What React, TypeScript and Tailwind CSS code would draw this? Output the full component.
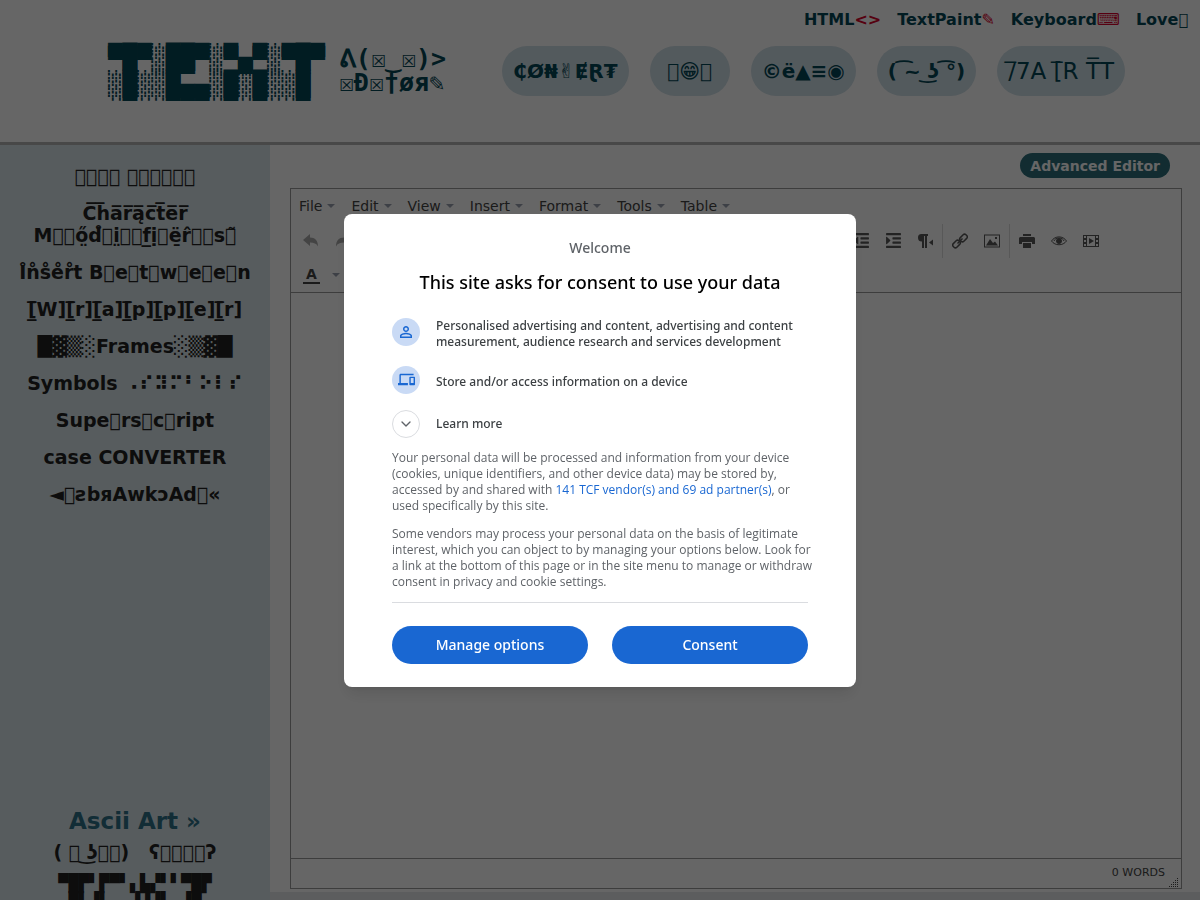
import type { ReactNode } from "react"
import { ChevronDown } from "lucide-react"
import { MdDevices, MdPersonOutline } from "react-icons/md"
import { FaIndent, FaOutdent } from "react-icons/fa"

const topLinks = [
  { label: "HTML", mark: "<>" },
  { label: "TextPaint", mark: "✎" },
  { label: "Keyboard", mark: "⌨" },
  { label: "Love", mark: "\u{F0000}", plain: true },
]

const pills = ["₵Ø₦✌ɆⱤ₮", "\u{F0000}😁\u{F0000}", "©ë▲≡◉", "( ͡~ ͜ʖ ͡°)"]

const sideLinks = [
  "\u{F0000}\u{F0000}\u{F0000}\u{F0000} \u{F0000}\u{F0000}\u{F0000}\u{F0000}\u{F0000}\u{F0000}",
  "C̅h̅a̅r̅ą̅c̅t̅e̅r̅ M\u{F0000}\u{F0000}ő̤d̊\u{F0000}i̤\u{F0000}\u{F0000}f̲ị\u{F0000}ë̱r̂\u{F0000}\u{F0000}s\u{F0000}̃",
  "I̊n̊s̊e̊r̊t B\u{F0000}e\u{F0000}t\u{F0000}w\u{F0000}e\u{F0000}e\u{F0000}n",
  "[̲̅W][̲̅r][̲̅a][̲̅p][̲̅p][̲̅e][̲̅r]",
  "█▓▒░Frames░▒▓█",
  "Symbols ⠠⠎⠽⠍⠃⠕⠇⠎",
  "Supe\u{F0000}rs\u{F0000}c\u{F0000}ript",
  "case CONVERTER",
  "◄\u{F0000}ƨbяAwkɔAd\u{F0000}«",
]

const menus = ["File", "Edit", "View", "Insert", "Format", "Tools", "Table"]

function ToolButton({ label, children }: { label: string; children: ReactNode }) {
  return (
    <button type="button" aria-label={label} className="flex h-7 w-8 items-center justify-center text-[#595959]">
      {children}
    </button>
  )
}

function Caret() {
  return <span className="border-x-4 border-t-4 border-x-transparent border-t-gray-400" />
}

function Header() {
  return (
    <header className="h-[145px] shrink-0 border-b-3 border-[#b4b4b4] bg-white text-[#044655]">
      <nav className="flex h-10 items-center justify-end gap-4 pr-3 text-base font-bold">
        {topLinks.map((link) => (
          <a key={link.label} href="#" className="whitespace-nowrap">
            {link.label}
            <span className={link.plain ? "" : "text-[#d8002c]"}>{link.mark}</span>
          </a>
        ))}
      </nav>
      <div className="flex items-start">
        <a href="#" className="ml-27 flex items-center gap-[14px] pt-1 font-bold">
          <pre className="font-['DejaVu_Sans_Mono',monospace] text-2xl leading-[27px] text-shadow-[0_3px_0_#044655]">
            {"▀█▀░██▀░▀▄▀░▀█▀\n░█░░█▄▄░█░█░░█ "}
          </pre>
          <pre className="font-['DejaVu_Sans_Mono',monospace] text-[25px] leading-6">{"ᕕ(☒‿☒)>\n☒Ð☒†øя✎"}</pre>
        </a>
        <nav className="ml-14 flex gap-[21px] pt-[6px]">
          {pills.map((pill) => (
            <a
              key={pill}
              href="#"
              className="flex h-[50px] min-w-20 items-center justify-center rounded-full bg-[#cfe0e8] px-[11px] text-xl font-bold whitespace-nowrap"
            >
              {pill}
            </a>
          ))}
          <a
            href="#"
            className="flex h-[50px] items-center justify-center rounded-full bg-[#cfe0e8] px-[11px] text-[23px] whitespace-nowrap"
          >
            {"/̅7A [̅R T̅T"}
          </a>
        </nav>
      </div>
    </header>
  )
}

function Sidebar() {
  return (
    <aside className="flex w-[270px] shrink-0 flex-col bg-[#dae6ea] text-center text-[#222]">
      <nav className="flex flex-col gap-[15px] px-4 pt-5 text-[19px] leading-[22px] font-bold">
        {sideLinks.map((link) => (
          <a key={link} href="#">
            {link}
          </a>
        ))}
      </nav>
      <div className="mt-auto h-24 overflow-hidden">
        <a href="#" className="block text-[23px] leading-[34px] font-bold text-[#2d7088]">
          Ascii Art »
        </a>
        <p className="text-[19px] leading-7 font-bold whitespace-pre">
          {"( \u{F0000} ͜ʖ\u{F0000}\u{F0000})   ʕ\u{F0000}\u{F0000}\u{F0000}\u{F0000}ʔ"}
        </p>
        <pre className="pt-2 font-['DejaVu_Sans_Mono',monospace] text-[17px] leading-[18px] font-bold">
          {"▀█▛▘▛▀▘▖▙▞▘▘▀█▛\n▖█▌▝▙▄▖▐▐▐▌▖▝█▖"}
        </pre>
      </div>
    </aside>
  )
}

function Toolbar() {
  return (
    <div className="border-b border-[#999] px-1">
      <div className="flex h-[34px] items-center gap-4 px-1 text-sm text-[#444]">
        {menus.map((menu) => (
          <button key={menu} type="button" className="flex items-center gap-[5px]">
            {menu}
            <Caret />
          </button>
        ))}
      </div>
      <div className="flex h-[35px] items-center justify-between pr-[70px]">
        <div className="flex">
          <ToolButton label="Undo">
            <svg viewBox="0 0 16 14" className="w-4 fill-[#aaa]">
              <path d="M7 0v3.5c5 0 8 3 8 9-1.500-3-4-4-8-4V12L0 6z" />
            </svg>
          </ToolButton>
          <ToolButton label="Redo">
            <svg viewBox="0 0 16 14" className="w-4 fill-[#aaa]">
              <path d="M9 0v3.500c-5 0-8 3-8 9 1.500-3 4-4 8-4V12l7-6z" />
            </svg>
          </ToolButton>
        </div>
        <div className="flex items-center">
          <ToolButton label="Decrease indent">
            <FaOutdent size={17} />
          </ToolButton>
          <ToolButton label="Increase indent">
            <FaIndent size={17} />
          </ToolButton>
          <ToolButton label="Right to left">
            <svg viewBox="0 0 16 16" className="w-4 fill-current">
              <path d="M4.500 1H11v2h-1v12H8V3H7v12H5V8.500a3.750 3.750 0 0 1-.5-7.500zM16 6.500v6L12 9.500z" />
            </svg>
          </ToolButton>
          <span className="mx-px h-[34px] w-px bg-[#ddd]" />
          <ToolButton label="Insert link">
            <svg viewBox="0 0 16 16" className="w-4 fill-none stroke-current" strokeWidth="1.5">
              <rect x="7.500" y="2.500" width="8" height="5" rx="2" transform="rotate(-45 11.500 5)" />
              <rect x=".5" y="8.500" width="8" height="5" rx="2" transform="rotate(-45 4.500 11)" />
              <path d="M5.500 10.500l5-5" />
            </svg>
          </ToolButton>
          <ToolButton label="Insert image">
            <svg viewBox="0 0 16 16" className="w-4 fill-current">
              <path d="M0 1.500h16v13H0zM1 2.500v11h14v-11z" fillRule="evenodd" />
              <path d="M2 12.500L6 6l3 4 2-1.500 3 4zM11 4h2v2h-2z" />
            </svg>
          </ToolButton>
          <span className="mx-px h-[34px] w-px bg-[#ddd]" />
          <ToolButton label="Print">
            <svg viewBox="0 0 16 16" className="w-4 fill-current">
              <path d="M4 1h8v2H4zM1 4h14l1 1v6h-3V9H3v2H0V5zM4 10h8v5H4z" />
            </svg>
          </ToolButton>
          <ToolButton label="Preview">
            <svg viewBox="0 0 16 16" className="w-4 fill-none stroke-current">
              <path d="M.5 8C4 2.500 12 2.500 15.500 8 12 13 4 13 .5 8z" />
              <path d="M3 8c1-2 2-3 5-3s4 1 5 3" />
              <circle cx="8" cy="8" r="2.500" fill="currentColor" />
            </svg>
          </ToolButton>
          <ToolButton label="Insert media">
            <svg viewBox="0 0 16 16" className="w-4 fill-current">
              <path
                fillRule="evenodd"
                d="M0 2h16v12H0zM1 3v2h2V3zM1 7v2h2V7zM1 11v2h2v-2zM13 3v2h2V3zM13 7v2h2V7zM13 11v2h2v-2zM4 3v10h8V3z"
              />
              <path d="M6 5l5 3-5 3z" />
            </svg>
          </ToolButton>
        </div>
      </div>
      <div className="flex h-[34px] items-center">
        <button type="button" aria-label="Text color" className="flex items-center gap-3 px-2 text-[#444]">
          <span className="border-b-2 border-current px-[3px] text-sm leading-4 font-bold">A</span>
          <Caret />
        </button>
      </div>
    </div>
  )
}

function Editor() {
  return (
    <main className="mb-2 flex min-w-0 flex-1 flex-col bg-white px-5 pt-2 pr-[18px] pb-[3px]">
      <button
        type="button"
        className="mr-3 mb-[10px] h-[25px] self-end rounded-full bg-[#2d6f7c] px-[10px] text-sm font-bold text-white"
      >
        Advanced Editor
      </button>
      <div className="flex flex-1 flex-col border border-[#999]">
        <Toolbar />
        <textarea aria-label="Text" className="w-full flex-1 resize-none bg-transparent p-2 outline-none" />
        <div className="flex h-[30px] items-center justify-end gap-1 border-t border-[#999] pr-[2px] text-[11px] text-[#444]">
          0 WORDS
          <svg viewBox="0 0 10 10" className="w-[10px] self-end fill-[#444]">
            <path d="M8 0h1v1H8zM6 2h1v1H6zM8 2h1v1H8zM4 4h1v1H4zM6 4h1v1H6zM8 4h1v1H8zM2 6h1v1H2zM4 6h1v1H4zM6 6h1v1H6zM8 6h1v1H8zM0 8h1v1H0zM2 8h1v1H2zM4 8h1v1H4zM6 8h1v1H6zM8 8h1v1H8z" />
          </svg>
        </div>
      </div>
    </main>
  )
}

function ConsentDialog() {
  return (
    <div className="fixed inset-0 flex items-center justify-center bg-black/60">
      <section
        role="dialog"
        aria-labelledby="consent-title"
        className="w-full max-w-lg rounded-lg bg-white px-12 pt-6 pb-[23px] font-['Noto_Sans',sans-serif] text-xs leading-4 text-[#5f6368] shadow-lg"
      >
        <p className="text-center text-sm leading-5 font-medium">Welcome</p>
        <h1 id="consent-title" className="mt-3 text-center text-lg leading-6 font-medium text-black">
          This site asks for consent to use your data
        </h1>
        <ul className="mt-6 flex flex-col gap-4 font-medium text-[#3c4043]">
          <li className="flex gap-4">
            <span className="flex size-7 shrink-0 items-center justify-center rounded-full bg-[#c9daf5] text-[#1967d2]">
              <MdPersonOutline size={18} />
            </span>
            <span>Personalised advertising and content, advertising and content measurement, audience research and services development</span>
          </li>
          <li className="flex gap-4">
            <span className="flex size-7 shrink-0 items-center justify-center rounded-full bg-[#c9daf5] text-[#1967d2]">
              <MdDevices size={17} />
            </span>
            <span className="pt-2">Store and/or access information on a device</span>
          </li>
          <li>
            <button type="button" className="flex items-center gap-4">
              <span className="flex size-7 items-center justify-center rounded-full border border-[#dadce0] text-[#5f6368]">
                <ChevronDown size={16} />
              </span>
              Learn more
            </button>
          </li>
        </ul>
        <div className="mt-3 -mr-1 flex flex-col gap-3 font-['Open_Sans',sans-serif]">
          <p>
            Your personal data will be processed and information from your device (cookies, unique identifiers, and other
            device data) may be stored by, accessed by and shared with{" "}
            <a href="#" className="text-[#1967d2]">
              141 TCF vendor(s) and 69 ad partner(s)
            </a>
            , or used specifically by this site.
          </p>
          <p>
            Some vendors may process your personal data on the basis of legitimate interest, which you can object to by
            managing your options below. Look for a link at the bottom of this page or in the site menu to manage or withdraw
            consent in privacy and cookie settings.
          </p>
        </div>
        <div className="mt-3 flex gap-6 border-t border-[#dadce0] pt-[23px] text-sm font-medium text-white">
          <button type="button" className="h-[38px] flex-1 rounded-full bg-[#1967d2]">
            Manage options
          </button>
          <button type="button" className="h-[38px] flex-1 rounded-full bg-[#1967d2]">
            Consent
          </button>
        </div>
      </section>
    </div>
  )
}

export default function App() {
  return (
    <div className="flex h-screen flex-col overflow-hidden bg-[#e6e9ec] font-['DejaVu_Sans',sans-serif]">
      <Header />
      <div className="flex min-h-0 flex-1">
        <Sidebar />
        <Editor />
      </div>
      <ConsentDialog />
    </div>
  )
}
